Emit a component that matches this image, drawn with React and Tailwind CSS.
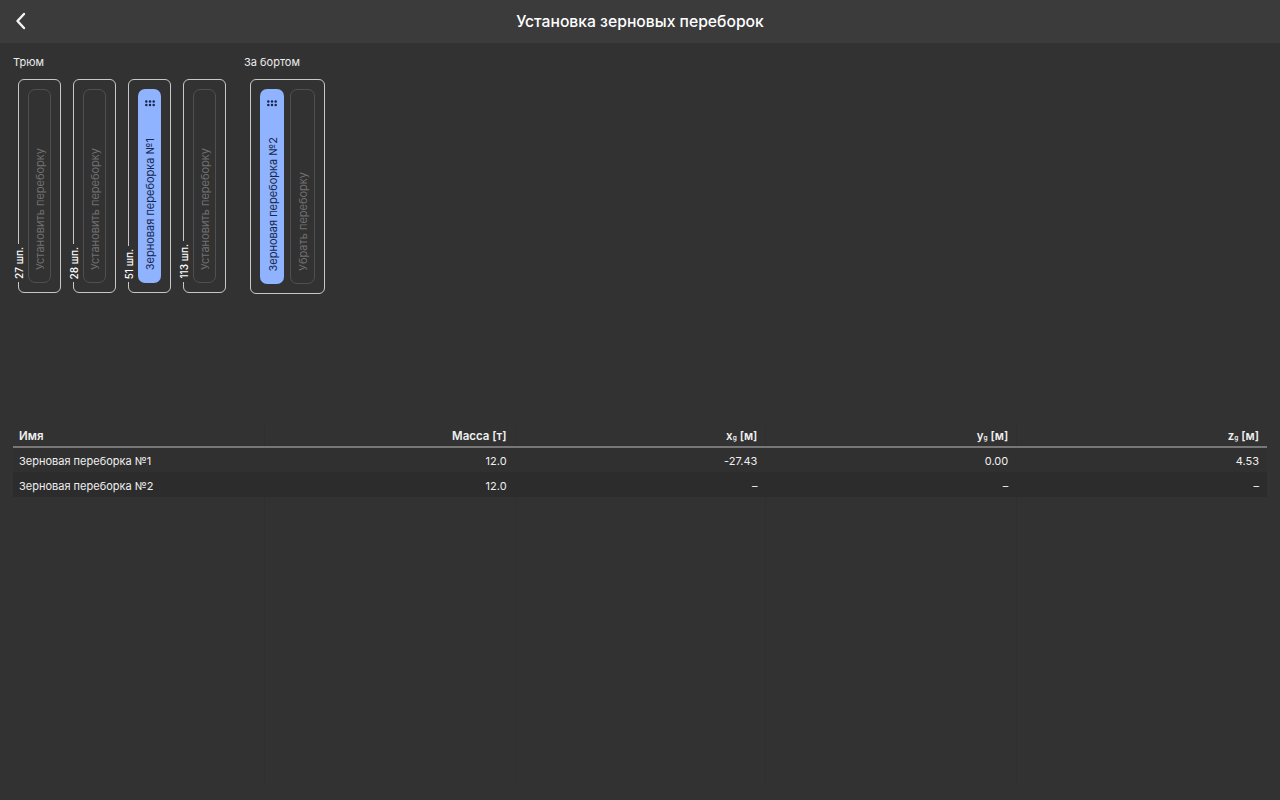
const font = { fontFamily: 'Inter, "Noto Sans", sans-serif' }

const hold = [
  { count: '27 шп.' },
  { count: '28 шп.' },
  { count: '51 шп.', name: 'Зерновая переборка №1' },
  { count: '113 шп.' },
]

const cols = ['Масса [т]', 'x', 'y', 'z']

const rows = [
  { name: 'Зерновая переборка №1', vals: ['12.0', '-27.43', '0.00', '4.53'] },
  { name: 'Зерновая переборка №2', vals: ['12.0', '–', '–', '–'] },
]

function Dots() {
  return (
    <svg width="10" height="7" viewBox="0 0 10 7" className="shrink-0">
      {[1.3, 5, 8.7].map((x) =>
        [1.5, 5].map((y) => <circle key={`${x}-${y}`} cx={x} cy={y} r="1.25" fill="#16294d" />)
      )}
    </svg>
  )
}

function Vertical({ children, className }) {
  return (
    <span className={`[writing-mode:vertical-rl] [text-orientation:sideways] rotate-180 whitespace-nowrap ${className}`}>
      {children}
    </span>
  )
}

function Bulkhead({ name, w }) {
  return (
    <div className={`flex h-full ${w} flex-col items-center rounded-[7px] bg-[#8fb3ff] pt-[11px] pb-[13px]`}>
      <Dots />
      <div className="flex-1" />
      <Vertical className="ml-[2px] text-[11px] leading-none text-[#16294d]">{name}</Vertical>
    </div>
  )
}

function EmptySlot({ label, w }) {
  return (
    <div className={`flex h-full ${w} flex-col items-center justify-end rounded-[7px] border border-[#505050] pb-[12px]`}>
      <Vertical className="ml-[2px] text-[11px] leading-none text-[#707070]">{label}</Vertical>
    </div>
  )
}

function Frame({ count, name }) {
  return (
    <div className="relative flex h-[214px] w-[43px] justify-center rounded-[6px] border border-[#c8c8c8] pt-[9px] pb-[9px]">
      {name ? <Bulkhead name={name} w="w-[23px]" /> : <EmptySlot label="Установить переборку" w="w-[23px]" />}
      <div className="absolute bottom-[10px] left-[-7px] flex w-[13px] justify-center rounded-[3px] bg-[#323232] py-[3px]">
        <Vertical className="text-[10px] leading-none font-medium text-white">{count}</Vertical>
      </div>
    </div>
  )
}

export default function App() {
  return (
    <div className="flex h-[800px] w-[1280px] flex-col overflow-hidden bg-[#323232] text-white" style={font}>
      <header className="relative flex h-[43px] shrink-0 items-center justify-center bg-[#3b3b3b]">
        <svg width="12" height="18" viewBox="0 0 12 18" fill="none" className="absolute top-[12px] left-[15px]">
          <path d="M9 2 L2.5 9 L9 16" stroke="#f4f4f4" strokeWidth="2.4" strokeLinecap="round" strokeLinejoin="round" />
        </svg>
        <h1 className="text-[15.7px] font-medium">Установка зерновых переборок</h1>
      </header>

      <div className="flex gap-[18px] pt-[12px] pl-[13px]">
        <section>
          <p className="mb-[10px] text-[11px] leading-[14px] text-[#ececec]">Трюм</p>
          <div className="flex gap-[12px] pl-[5px]">
            {hold.map((h) => (
              <Frame key={h.count} count={h.count} name={h.name} />
            ))}
          </div>
        </section>
        <section>
          <p className="mb-[10px] text-[11px] leading-[14px] text-[#ececec]">За бортом</p>
          <div className="pl-[6px]">
            <div className="flex h-[215px] w-[75px] gap-[6px] rounded-[6px] border border-[#c8c8c8] pt-[9px] pb-[9px] pl-[9px]">
              <Bulkhead name="Зерновая переборка №2" w="w-[24px]" />
              <EmptySlot label="Убрать переборку" w="w-[25px]" />
            </div>
          </div>
        </section>
      </div>

      <div className="relative mx-[13px] mt-[131px] h-[360px]">
        <div className="absolute inset-0 grid grid-cols-5">
          {[0, 1, 2, 3, 4].map((i) => (
            <div key={i} className={i > 0 ? 'border-l border-[#2f2f2f]' : ''} />
          ))}
        </div>
        <div className="relative">
          <div className="grid h-[23px] grid-cols-5 items-center border-b-2 border-[#777777] pt-[3px] text-[11.5px] font-semibold text-[#f0f0f0]">
            <div className="pl-[6px]">Имя</div>
            {cols.map((c, i) =>
              i === 0 ? (
                <div key={c} className="pr-[8px] text-right">{c}</div>
              ) : (
                <div key={c} className="pr-[8px] text-right">
                  {c}
                  <span className="text-[6.5px]">g</span> [м]
                </div>
              )
            )}
          </div>
          {rows.map((r, i) => (
            <div
              key={r.name}
              className={`grid grid-cols-5 items-center pt-[3px] text-[11px] text-[#efefef] ${i === 1 ? 'h-[25px] bg-[#2c2c2c]' : 'h-[24px] bg-[#303030]'}`}
            >
              <div className="pl-[6px]">{r.name}</div>
              {r.vals.map((v, j) => (
                <div key={j} className="pr-[8px] text-right">{v}</div>
              ))}
            </div>
          ))}
        </div>
      </div>
    </div>
  )
}
